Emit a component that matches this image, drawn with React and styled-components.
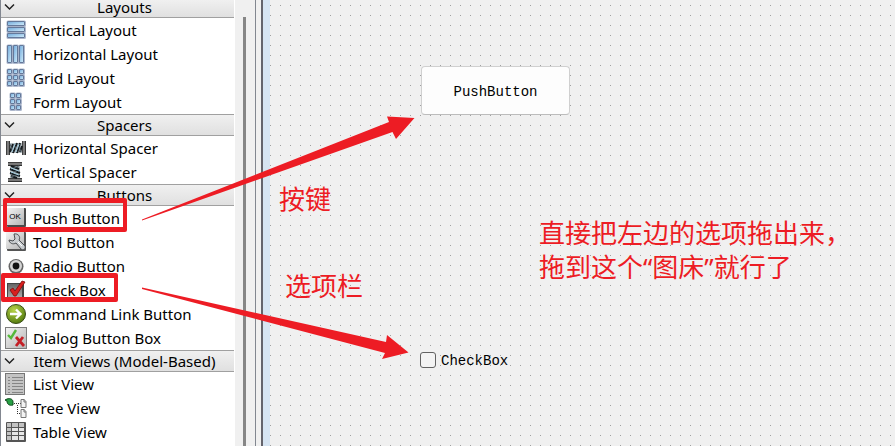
import styled, { createGlobalStyle } from "styled-components";

const GlobalStyle = createGlobalStyle`
  * {
    box-sizing: border-box;
  }

  body {
    margin: 0;
    background-color: #f0f0f0;
    color: #000;
    font-family: "Noto Sans", "Noto Sans CJK SC", sans-serif;
    font-size: 15px;
  }
`;

const StyledDesigner = styled.div`
  position: relative;
  display: flex;
  height: 100vh;
  overflow: hidden;
`;

/* Widget box */

const WidgetBox = styled.aside`
  display: flex;
  flex: none;
  width: 256px;
  border-left: 1px solid #828790;
  border-right: 1px solid #828790;
`;

const Categories = styled.div`
  flex: 1;
  background-color: #fff;
`;

const CategoryHeader = styled.button`
  display: flex;
  align-items: center;
  width: calc(100% - 1px);
  height: 22px;
  padding: 0 0 0 3px;
  border: solid #a0a0a0;
  border-width: 1px 0;
  background: linear-gradient(#f0f0f0, #e0e0e0);
  color: inherit;
  font: inherit;
  line-height: 20px;

  svg {
    flex: none;
  }

  span {
    flex: 1;
    text-align: center;
  }

  section:first-child > & {
    height: 18px;
    padding-bottom: 3px;
    border-top: 0;
    line-height: 14px;
  }
`;

const WidgetList = styled.ul`
  margin: 0;
  padding: 0;
  list-style: none;
`;

const WidgetItem = styled.li`
  display: flex;
  align-items: center;
  gap: 6px;
  height: 24px;
  padding-left: 4px;
  white-space: nowrap;

  svg {
    flex: none;
  }
`;

const Scrollbar = styled.div`
  flex: none;
  width: 20px;
  padding: 17px 9px 0 8px;
  background-color: #f0f0f0;

  div {
    height: 100%;
    background-color: #868686;
  }
`;

const Splitter = styled.div`
  flex: none;
  width: 7px;
  border-right: 2px solid #64646c;
`;

/* Form canvas */

const FormWindow = styled.main`
  position: relative;
  flex: 1;
  border-left: 7px solid #d6e4f2;
  background: conic-gradient(from 270deg at 1px 1px, #a0a0a0 90deg, transparent 0)
    0 5px / 10px 10px #f0f0f0;
  font-family: "Liberation Mono", monospace;
  font-size: 14px;
`;

const PushButton = styled.button`
  position: absolute;
  top: 66px;
  left: 151px;
  width: 149px;
  height: 49px;
  padding: 2px 0 0;
  border: 1px solid #d0d0d0;
  border-bottom-color: #bcbcbc;
  border-radius: 4px;
  background-color: #fdfdfd;
  color: inherit;
  font: inherit;
`;

const CheckBox = styled.label`
  position: absolute;
  top: 352px;
  left: 150px;
  display: flex;
  align-items: flex-start;
  gap: 5px;
  line-height: 18px;

  input {
    width: 16px;
    height: 16px;
    margin: 0;
    border: 1px solid #626262;
    border-radius: 3px;
    background-color: #f3f3f3;
    appearance: none;
  }
`;

/* Notes drawn over the window */

const Note = styled.p`
  position: absolute;
  top: ${({ $top }) => $top}px;
  left: ${({ $left }) => $left}px;
  margin: 0;
  color: #ed1c24;
  font-family: "Noto Sans", "Noto Sans CJK SC", sans-serif;
  font-size: 26px;
  line-height: 34px;
  white-space: nowrap;
`;

const Highlight = styled.div`
  position: absolute;
  top: ${({ $top }) => $top}px;
  left: ${({ $left }) => $left}px;
  width: ${({ $width }) => $width}px;
  height: ${({ $height }) => $height}px;
  border: solid #ed1c24;
  border-width: 5px 4px;
  border-radius: 2px;
`;

const Arrows = styled.svg`
  position: absolute;
  top: 0;
  left: 0;
  fill: #ed1c24;
  pointer-events: none;
`;

/* Icons */

function Icon({ children }) {
  return (
    <svg width="22" height="22" viewBox="0 0 22 22" aria-hidden="true">
      {children}
    </svg>
  );
}

const GradientDefs = styled.svg`
  position: absolute;
`;

function Gradients() {
  return (
    <GradientDefs width="0" height="0" aria-hidden="true">
      <defs>
        <linearGradient id="blue" x1="0" y1="0" x2="1" y2="1">
          <stop offset="0" stopColor="#6fa8da" />
          <stop offset="1" stopColor="#d3eefb" />
        </linearGradient>
        <linearGradient id="grey" x1="0" y1="0" x2="1" y2="1">
          <stop offset="0" stopColor="#f4f4f4" />
          <stop offset="1" stopColor="#b4b4b4" />
        </linearGradient>
        <linearGradient id="dark" x1="0" y1="0" x2="0" y2="1">
          <stop offset="0" stopColor="#666" />
          <stop offset="1" stopColor="#a8a8a8" />
        </linearGradient>
        <linearGradient id="metal" x1="0" y1="0" x2="1" y2="0">
          <stop offset="0" stopColor="#222" />
          <stop offset="0.5" stopColor="#999" />
          <stop offset="1" stopColor="#111" />
        </linearGradient>
        <radialGradient id="green" cx="0.4" cy="0.3" r="0.7">
          <stop offset="0" stopColor="#b9d44a" />
          <stop offset="1" stopColor="#567d10" />
        </radialGradient>
      </defs>
    </GradientDefs>
  );
}

function Cells({ xs, ys, width, height }) {
  return (
    <Icon>
      {ys.map((y) =>
        xs.map((x) => (
          <g key={`${x}-${y}`}>
            <rect
              x={x - 0.5}
              y={y - 0.5}
              width={width + 1.5}
              height={height + 1.5}
              rx="1.5"
              fill="#9aa6c0"
              opacity="0.8"
            />
            <rect
              x={x + 0.5}
              y={y + 0.5}
              width={width - 1}
              height={height - 1}
              rx="0.5"
              fill="url(#blue)"
              stroke="#65799a"
            />
          </g>
        ))
      )}
    </Icon>
  );
}

const Spring = () => (
  <>
    <rect x="1" y="4" width="4" height="14" fill="url(#metal)" />
    <rect x="17" y="4" width="4" height="14" fill="url(#metal)" />
    <path d="M5 6H17V16H5Z" fill="#b7c0c4" />
    <path
      d="M5 15L8 7M8 16L12 6M12 16L15 6M15 15L17 9"
      stroke="#131a1e"
      strokeWidth="2"
      fill="none"
    />
    <path
      d="M5 7L8 15M9 7L12 15M13 7L16 15"
      stroke="#53636b"
      fill="none"
    />
    <path d="M7 15L10 7M11 15L14 7" stroke="#a9d3e6" fill="none" />
  </>
);

const icons = {
  vertical: <Cells xs={[2]} ys={[2, 8, 14]} width={18} height={5} />,
  horizontal: <Cells xs={[2, 8, 14]} ys={[2]} width={5} height={18} />,
  grid: <Cells xs={[2, 8, 14]} ys={[2, 8, 14]} width={5} height={5} />,
  form: <Cells xs={[5, 11]} ys={[2, 8, 14]} width={5} height={5} />,
  horizontalSpacer: (
    <Icon>
      <Spring />
    </Icon>
  ),
  verticalSpacer: (
    <Icon>
      <g transform="rotate(90 11 11) translate(0 1)">
        <Spring />
      </g>
    </Icon>
  ),
  push: (
    <Icon>
      <rect x="2" y="1" width="19" height="19" rx="1" fill="#4a4a4a" />
      <rect x="2" y="1" width="17" height="17" fill="url(#grey)" />
      <text
        x="10"
        y="12"
        fontFamily="Liberation Sans, sans-serif"
        fontSize="8"
        textAnchor="middle"
      >
        OK
      </text>
    </Icon>
  ),
  tool: (
    <Icon>
      <rect x="2" y="1" width="19" height="19" rx="1" fill="#555" />
      <rect x="1" y="1" width="18" height="17" fill="url(#grey)" />
      <path
        d="M9 3C13 2 16 6 14 9L20 15C21 18 18 20 16 18L11 12C8 14 4 12 4 9L8 10L10 8Z"
        fill="#c9cdd0"
        stroke="#4c4f52"
      />
      <path d="M13 11L17 15" stroke="#fff" />
    </Icon>
  ),
  radio: (
    <Icon>
      <circle cx="11" cy="11.5" r="7.5" fill="#666" />
      <circle cx="11" cy="11" r="6" fill="#d4d4d4" />
      <circle cx="11" cy="11" r="3.4" fill="#111" />
    </Icon>
  ),
  check: (
    <Icon>
      <rect x="2" y="4" width="17" height="15" fill="#444" />
      <rect x="3" y="5" width="14" height="13" fill="url(#dark)" />
      <path
        d="M5 11L8 9L10 12L17 2L20 3L11 17H9Z"
        fill="#d8201f"
        stroke="#7c0c0c"
        strokeWidth="0.8"
      />
    </Icon>
  ),
  command: (
    <Icon>
      <circle cx="11" cy="11" r="9.5" fill="url(#green)" stroke="#3a4d16" />
      <path
        d="M5 11H15M11 6.5L15.5 11L11 15.5"
        fill="none"
        stroke="#fff"
        strokeWidth="2.4"
      />
    </Icon>
  ),
  dialog: (
    <Icon>
      <rect
        x="0.5"
        y="0.5"
        width="21"
        height="21"
        fill="url(#grey)"
        stroke="#7d7d7d"
      />
      <path
        d="M3 8L6 11L11 3"
        fill="none"
        stroke="#55b83a"
        strokeWidth="2.4"
      />
      <path
        d="M11 10L19 19M18 10L11 19"
        fill="none"
        stroke="#c41f26"
        strokeWidth="2.8"
      />
    </Icon>
  ),
  list: (
    <Icon>
      <rect
        x="0.5"
        y="0.5"
        width="19"
        height="21"
        fill="#c4c4c4"
        stroke="#777"
      />
      <path
        d="M3 4.5H5M7 4.5H18M3 7.5H5M7 7.5H18M3 10.5H5M7 10.5H18M3 13.5H5M7 13.5H18M3 16.5H5M7 16.5H18M3 19.5H5M7 19.5H18"
        stroke="#858585"
      />
    </Icon>
  ),
  tree: (
    <Icon>
      <path
        d="M0 3L2 2C5 1 8 2 8 5V8C4 9 2 7 2 4Z"
        fill="#27a044"
        stroke="#0c4a1b"
      />
      <path
        d="M9 6.5H16M12.5 8V17M14 16.5H16"
        stroke="#333"
        strokeDasharray="1 1"
      />
      <path
        d="M16 2.5H19L21 4.5V10.5H16ZM16 12.5H19L21 14.5V20.5H16Z"
        fill="#f3f3f3"
        stroke="#777"
      />
      <path d="M19 2V5H21M19 12V15H21" fill="none" stroke="#777" />
    </Icon>
  ),
  table: (
    <Icon>
      <rect x="1" y="1" width="20" height="20" rx="1" fill="#555" />
      <path
        d="M2 2H6V6H2ZM7 2H13V6H7ZM14 2H19V6H14ZM2 7H6V10H2ZM2 11H6V14H2ZM2 15H6V19H2Z"
        fill="#c2c2c2"
      />
      <path
        d="M7 7H13V10H7ZM14 7H19V10H14ZM7 11H13V14H7ZM14 11H19V14H14ZM7 15H13V19H7ZM14 15H19V19H14Z"
        fill="#e6e6e6"
      />
    </Icon>
  ),
};

const categories = [
  {
    title: "Layouts",
    widgets: [
      ["vertical", "Vertical Layout"],
      ["horizontal", "Horizontal Layout"],
      ["grid", "Grid Layout"],
      ["form", "Form Layout"],
    ],
  },
  {
    title: "Spacers",
    widgets: [
      ["horizontalSpacer", "Horizontal Spacer"],
      ["verticalSpacer", "Vertical Spacer"],
    ],
  },
  {
    title: "Buttons",
    widgets: [
      ["push", "Push Button"],
      ["tool", "Tool Button"],
      ["radio", "Radio Button"],
      ["check", "Check Box"],
      ["command", "Command Link Button"],
      ["dialog", "Dialog Button Box"],
    ],
  },
  {
    title: "Item Views (Model-Based)",
    widgets: [
      ["list", "List View"],
      ["tree", "Tree View"],
      ["table", "Table View"],
    ],
  },
];

export default function App() {
  return (
    <StyledDesigner>
      <GlobalStyle />
      <Gradients />
      <WidgetBox>
        <Categories>
          {categories.map(({ title, widgets }) => (
            <section key={title}>
              <CategoryHeader type="button" aria-expanded="true">
                <svg width="11" height="10" viewBox="0 0 11 10">
                  <path
                    d="M1 2.5L5.5 7L10 2.5"
                    fill="none"
                    stroke="#222"
                    strokeWidth="1.5"
                  />
                </svg>
                <span>{title}</span>
              </CategoryHeader>
              <WidgetList>
                {widgets.map(([icon, name]) => (
                  <WidgetItem key={name}>
                    {icons[icon]}
                    {name}
                  </WidgetItem>
                ))}
              </WidgetList>
            </section>
          ))}
        </Categories>
        <Scrollbar>
          <div />
        </Scrollbar>
      </WidgetBox>
      <Splitter />
      <FormWindow>
        <PushButton type="button">PushButton</PushButton>
        <CheckBox>
          <input type="checkbox" />
          CheckBox
        </CheckBox>
        <Note $top={216} $left={269}>
          直接把左边的选项拖出来，
          <br />
          拖到这个“图床”就行了
        </Note>
        <Note $top={182} $left={9}>
          按键
        </Note>
        <Note $top={269} $left={15}>
          选项栏
        </Note>
      </FormWindow>
      <Highlight $top={198} $left={3} $width={124} $height={34} />
      <Highlight $top={273} $left={1} $width={117} $height={29} />
      <Arrows width="420" height="370" viewBox="0 0 420 370" aria-hidden="true">
        <path d="M142 219.5L389 122L387 116.5L414.5 118L396 139L392.5 132L142 220.5Z" />
        <path d="M142 287.5L386 342L387 335L408.5 352.5L382 359L385 353L142 289Z" />
      </Arrows>
    </StyledDesigner>
  );
}
